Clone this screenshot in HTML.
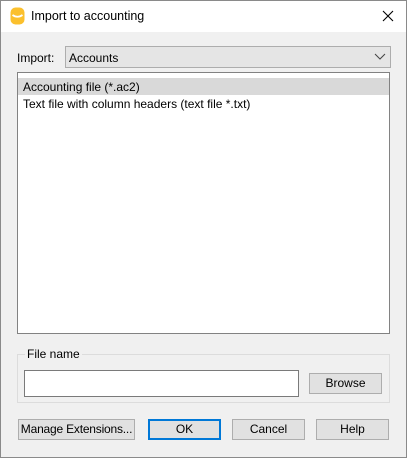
<!DOCTYPE html>
<html><head><style>
*{margin:0;padding:0;box-sizing:border-box}
body{width:407px;height:458px;overflow:hidden;font-family:"Liberation Sans",Arial,sans-serif;font-size:12px;color:#000;background:#f0f0f0}
.win{position:absolute;left:0;top:0;width:407px;height:458px;border:1px solid #8a8a8a;background:#f0f0f0}
.title{position:absolute;left:0;top:0;width:405px;height:31px;background:#fff}
.abs{position:absolute;white-space:nowrap}
.btn{position:absolute;background:#e1e1e1;border:1px solid #adadad;text-align:center;line-height:19px;height:21px;white-space:nowrap;overflow:hidden}
</style></head><body>
<div class="win">
<div class="title">
<svg class="abs" style="left:9px;top:6px" width="15" height="18" viewBox="0 0 15 18"><rect x="0.5" y="0.5" width="14" height="17" rx="5" fill="#fbc02d"/><path d="M2.5 8 Q7.5 11.5 12.5 8" stroke="#fff" stroke-width="1.8" fill="none"/></svg>
<div class="abs" style="left:30px;top:8px;font-size:12.5px">Import to accounting</div>
<svg class="abs" style="left:381px;top:9px" width="12" height="12"><path d="M1 1L11 11M11 1L1 11" stroke="#000" stroke-width="1.1"/></svg>
</div>
<div class="abs" style="left:16px;top:50px">Import:</div>
<div class="abs" style="left:64px;top:45px;width:326px;height:22px;background:#e5e5e5;border:1px solid #adadad"><span class="abs" style="left:3px;top:4px">Accounts</span>
<svg class="abs" style="left:308px;top:6px" width="12" height="8"><path d="M1 1L6 6L11 1" stroke="#444" fill="none"/></svg></div>
<div class="abs" style="left:16px;top:71px;width:373px;height:262px;background:#fff;border:1px solid #828282">
<div class="abs" style="left:0px;top:5px;width:371px;height:17px;background:#d9d9d9"></div>
<div class="abs" style="left:5px;top:7px">Accounting file (*.ac2)</div>
<div class="abs" style="left:5px;top:24px">Text file with column headers (text file *.txt)</div>
</div>
<div class="abs" style="left:16px;top:353px;width:373px;height:49px;border:1px solid #dcdcdc"></div>
<div class="abs" style="left:24px;top:346px;background:#f0f0f0;padding:0 2px">File name</div>
<div class="abs" style="left:23px;top:369px;width:275px;height:27px;background:#fff;border:1px solid #7a7a7a"></div>
<div class="btn" style="left:308px;top:372px;width:73px">Browse</div>
<div class="btn" style="left:17px;top:418px;width:117px;letter-spacing:-0.2px">Manage Extensions...</div>
<div class="btn" style="left:147px;top:418px;width:73px;border:2px solid #0078d7;line-height:17px">OK</div>
<div class="btn" style="left:231px;top:418px;width:73px">Cancel</div>
<div class="btn" style="left:315px;top:418px;width:73px">Help</div>
</div>
</body></html>
